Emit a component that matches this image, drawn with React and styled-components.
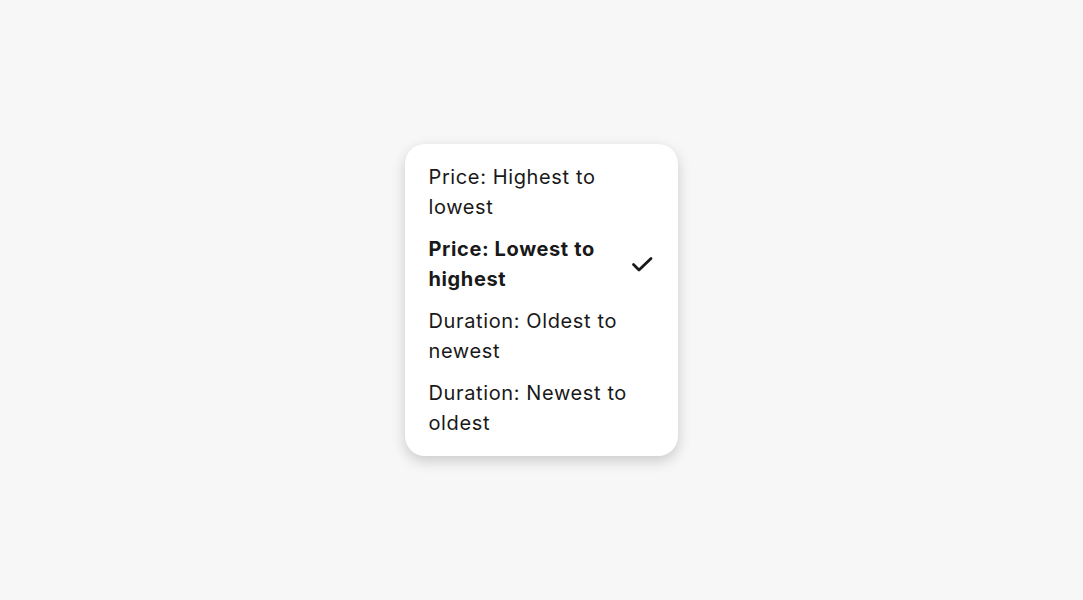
import React from "react";
import styled, { createGlobalStyle } from "styled-components";

const Global = createGlobalStyle`
  html, body { margin: 0; padding: 0; background: #f7f7f7; }
  body { font-family: Inter, "Liberation Sans", Arial, sans-serif; color: #191919; }
`;

const Page = styled.div`
  height: 600px;
  display: flex;
  align-items: flex-start;
  justify-content: center;
  padding-top: 144px;
  box-sizing: border-box;
`;

const Menu = styled.ul`
  list-style: none;
  margin: 0 0 0 -1px;
  padding: 12px 0;
  width: 273px;
  box-sizing: border-box;
  background: #ffffff;
  border-radius: 20px;
  box-shadow: 0 5px 14px rgba(0, 0, 0, 0.18);
`;

const Item = styled.li`
  display: flex;
  align-items: center;
  justify-content: space-between;
  gap: 8px;
  padding: 6px 24px;
  font-size: 20px;
  line-height: 30px;
  letter-spacing: 0.62px;
  font-weight: ${(p) => (p.$selected ? 700 : 400)};
  cursor: pointer;
`;

const Label = styled.span`
  flex: 1;
  max-width: 205px;
`;

const Check = styled.svg`
  width: 24px;
  height: 24px;
  flex-shrink: 0;
`;

const options = [
  "Price: Highest to lowest",
  "Price: Lowest to highest",
  "Duration: Oldest to newest",
  "Duration: Newest to oldest",
];

export default function App() {
  const selected = 1;
  return (
    <>
      <Global />
      <Page>
        <Menu role="listbox">
          {options.map((o, i) => (
            <Item key={o} $selected={i === selected} role="option" aria-selected={i === selected}>
              <Label>{o}</Label>
              {i === selected && (
                <Check viewBox="0 0 24 24" fill="none">
                  <path d="M3.5 12.5l5.5 5.5L21 6.5" stroke="#191919" strokeWidth="2.8" strokeLinecap="round" strokeLinejoin="round" />
                </Check>
              )}
            </Item>
          ))}
        </Menu>
      </Page>
    </>
  );
}
